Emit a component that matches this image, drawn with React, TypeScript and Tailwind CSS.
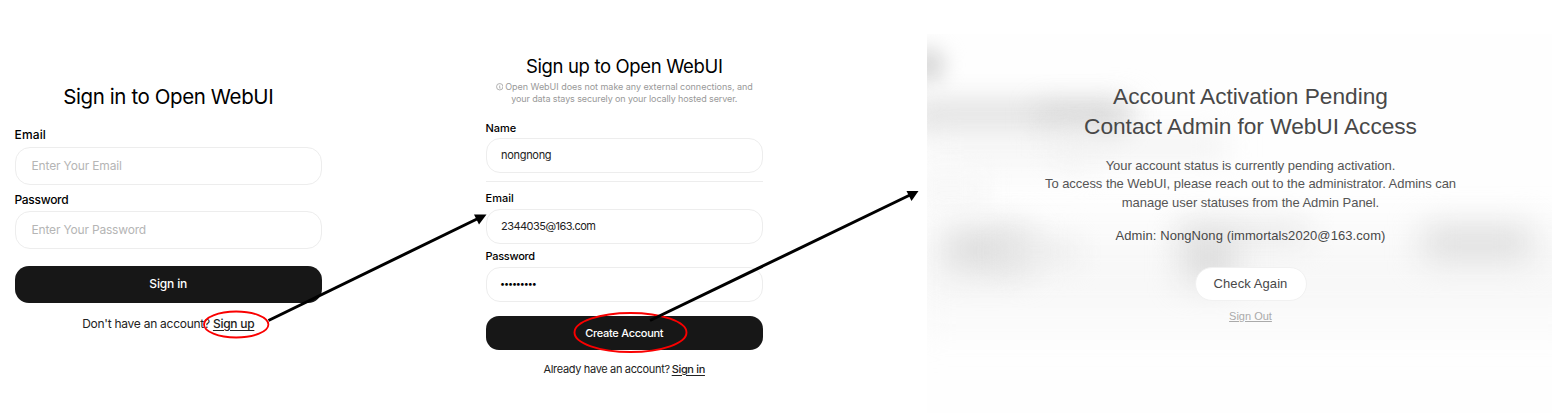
import type { ReactNode } from "react";

function Field({ children, className }: { children: ReactNode; className: string }) {
  return <div className={`flex items-center border border-[#ededed] bg-white ${className}`}>{children}</div>;
}

function SignIn() {
  return (
    <section className="ml-[14.5px] flex w-[307.5px] shrink-0 flex-col pt-[84px] text-black">
      <h1 className="flex h-[26px] items-center justify-center whitespace-nowrap text-[20.5px] tracking-[-0.4px]"><span>Sign in to Open WebUI</span></h1>
      <div className="mt-[17px] flex h-4 items-center text-[12px] font-medium tracking-[0.15px]"><span>Email</span></div>
      <Field className="mt-1 h-[38px] rounded-[15px] px-4 text-[12px] tracking-[-0.15px] text-[#b5b5b5]"><span>Enter Your Email</span></Field>
      <div className="mt-[7px] flex h-4 items-center text-[12px] font-medium tracking-[-0.3px]"><span>Password</span></div>
      <Field className="mt-[3px] h-[38px] rounded-[15px] px-4 text-[12px] tracking-[-0.18px] text-[#b5b5b5]"><span>Enter Your Password</span></Field>
      <button className="mt-[17px] flex h-[36.5px] items-center justify-center rounded-[14px] bg-[#171717] text-[12px] font-medium tracking-[-0.15px] text-white"><span>Sign in</span></button>
      <p className="mt-[13.5px] flex h-4 items-center justify-center gap-[3px] whitespace-nowrap text-[12px] tracking-[-0.26px] text-[#222]">
        <span>Don't have an account?</span>
        <span className="font-medium underline underline-offset-2">Sign up</span>
      </p>
    </section>
  );
}

function SignUp() {
  return (
    <section className="ml-[163.5px] flex w-[277.5px] shrink-0 flex-col pt-[55px] text-black">
      <h1 className="flex h-6 items-center justify-center whitespace-nowrap text-[18.5px] tracking-[-0.35px]"><span>Sign up to Open WebUI</span></h1>
      <div className="mt-[2px] flex h-6 flex-col items-center whitespace-nowrap text-[9px] leading-[12px] tracking-[-0.1px] text-[#999]">
        <div className="flex items-center gap-[2px] tracking-[-0.03px]">
          <svg className="size-[7.5px]" viewBox="0 0 14 14" fill="none" stroke="currentColor" strokeWidth="1.4">
            <circle cx="7" cy="7" r="6" />
            <path d="M6 6.3h1v3.5h1M7 3.6v1" />
          </svg>
          <span>Open WebUI does not make any external connections, and</span>
        </div>
        <span>your data stays securely on your locally hosted server.</span>
      </div>
      <div className="mt-[15px] flex h-4 items-center text-[11px] font-medium"><span>Name</span></div>
      <Field className="mt-[2px] h-[34.5px] rounded-[14px] px-[14.5px] text-[11px] tracking-[-0.3px] text-[#222]"><span>nongnong</span></Field>
      <div className="mt-[8.5px] h-px bg-[#ededed]" />
      <div className="mt-2 flex h-4 items-center text-[11px] font-medium tracking-[0.05px]"><span>Email</span></div>
      <Field className="mt-[3px] h-[34.5px] rounded-[14px] px-[14.5px] text-[11px] tracking-[-0.53px] text-[#222]"><span>2344035@163.com</span></Field>
      <div className="mt-[4.5px] flex h-4 items-center text-[11px] font-medium tracking-[-0.28px]"><span>Password</span></div>
      <Field className="mt-[3px] h-[34.5px] rounded-[14px] px-[13.5px] text-[11px] text-black"><span className="pb-px text-[9px] tracking-[-1.1px]">•••••••••</span></Field>
      <button className="mt-[14.5px] flex h-[33.5px] items-center justify-center rounded-[13px] bg-[#171717] text-[11px] font-medium tracking-[-0.28px] text-white"><span>Create Account</span></button>
      <p className="mt-[11.5px] flex h-4 items-center justify-center gap-[2px] whitespace-nowrap text-[11px] tracking-[-0.34px] text-[#222]">
        <span>Already have an account?</span>
        <span className="font-medium underline underline-offset-2">Sign in</span>
      </p>
    </section>
  );
}

function Backdrop() {
  return (
    <div className="absolute inset-0">
      <div className="absolute -left-4 top-[14px] h-[34px] w-[34px] rounded-full bg-[#d7d7d7] blur-[10px]" />
      <div className="absolute -left-5 top-[69px] h-[26px] w-[225px] bg-[#dbdbdb] blur-[15px]" />
      <div className="absolute left-[110px] top-[72px] h-[26px] w-[85px] bg-[#c8c8c8]/45 blur-[14px]" />
      <div className="absolute left-0 top-[98px] h-[40px] w-[170px] bg-[#f4f4f4]/60 blur-[16px]" />
      <div className="absolute left-[125px] top-[100px] h-[25px] w-[175px] bg-[#f0f0f0]/80 blur-[15px]" />
      <div className="absolute -left-4 top-[140px] h-[30px] w-[75px] bg-[#f7f7f7] blur-[12px]" />
      <div className="absolute -left-5 top-[195px] h-[95px] w-[690px] bg-[#f8f8f8] blur-[20px]" />
      <div className="absolute left-[18px] top-[194px] h-[44px] w-[84px] bg-[#dedede] blur-[16px]" />
      <div className="absolute left-[70px] top-[206px] h-[24px] w-[80px] bg-[#e8e8e8]/80 blur-[14px]" />
      <div className="absolute left-[252px] top-[188px] h-[22px] w-[130px] bg-[#e9e9e9] blur-[14px]" />
      <div className="absolute left-[256px] top-[200px] h-[48px] w-[52px] bg-[#dcdcdc] blur-[16px]" />
      <div className="absolute left-[496px] top-[192px] h-[34px] w-[108px] bg-[#dedede] blur-[16px]" />
    </div>
  );
}

function Pending() {
  return (
    <section className="relative ml-auto mt-[34px] h-[379px] w-[625px] shrink-0 overflow-hidden bg-[#fefefe] text-[#484848]">
      <Backdrop />
      <div className="relative ml-[11px] flex w-[625px] flex-col items-center whitespace-nowrap pt-[48px] font-['Liberation_Sans',sans-serif]">
        <h1 className="text-center text-[22.7px] leading-[29.5px]"><span>Account Activation Pending</span><br /><span className="tracking-[-0.03px]">Contact Admin for WebUI Access</span></h1>
        <p className="mt-[15.5px] text-center text-[13px] leading-[18.5px] tracking-[-0.05px] text-[#555]">
          <span>Your account status is currently pending activation.</span><br />
          <span>To access the WebUI, please reach out to the administrator. Admins can</span><br />
          <span>manage user statuses from the Admin Panel.</span>
        </p>
        <p className="mt-[14.5px] text-[13px] leading-[18px] tracking-[0.08px]"><span>Admin: NongNong (immortals2020@163.com)</span></p>
        <button className="mt-[22px] flex h-[34px] w-[112px] items-center justify-center rounded-full border border-[#f1f1f1] bg-white text-[13px] tracking-[0.08px]"><span>Check Again</span></button>
        <span className="mt-[7px] text-[11px] leading-4 text-[#aaa] underline">Sign Out</span>
      </div>
    </section>
  );
}

function Annotations() {
  return (
    <svg className="pointer-events-none absolute inset-0 size-full" viewBox="0 0 1552 413" fill="none">
      <ellipse cx="236.2" cy="324.5" rx="32.2" ry="13" stroke="#fa0000" strokeWidth="1.8" />
      <ellipse cx="630.5" cy="332.5" rx="56" ry="19.5" stroke="#fa0000" strokeWidth="1.9" />
      <g stroke="#000" strokeWidth="3">
        <path d="M268.5 320.5L478 218.5" />
        <path d="M650 320.5L910 195" />
      </g>
      <path d="M486.5 214.5L474 214.5L479 224.5Z" fill="#000" />
      <path d="M918.5 191L906.5 191L911.5 201Z" fill="#000" />
    </svg>
  );
}

export default function App() {
  return (
    <main className="relative flex h-[413px] w-[1552px] items-start overflow-hidden bg-white font-['Inter',sans-serif]">
      <SignIn />
      <SignUp />
      <Pending />
      <Annotations />
    </main>
  );
}
